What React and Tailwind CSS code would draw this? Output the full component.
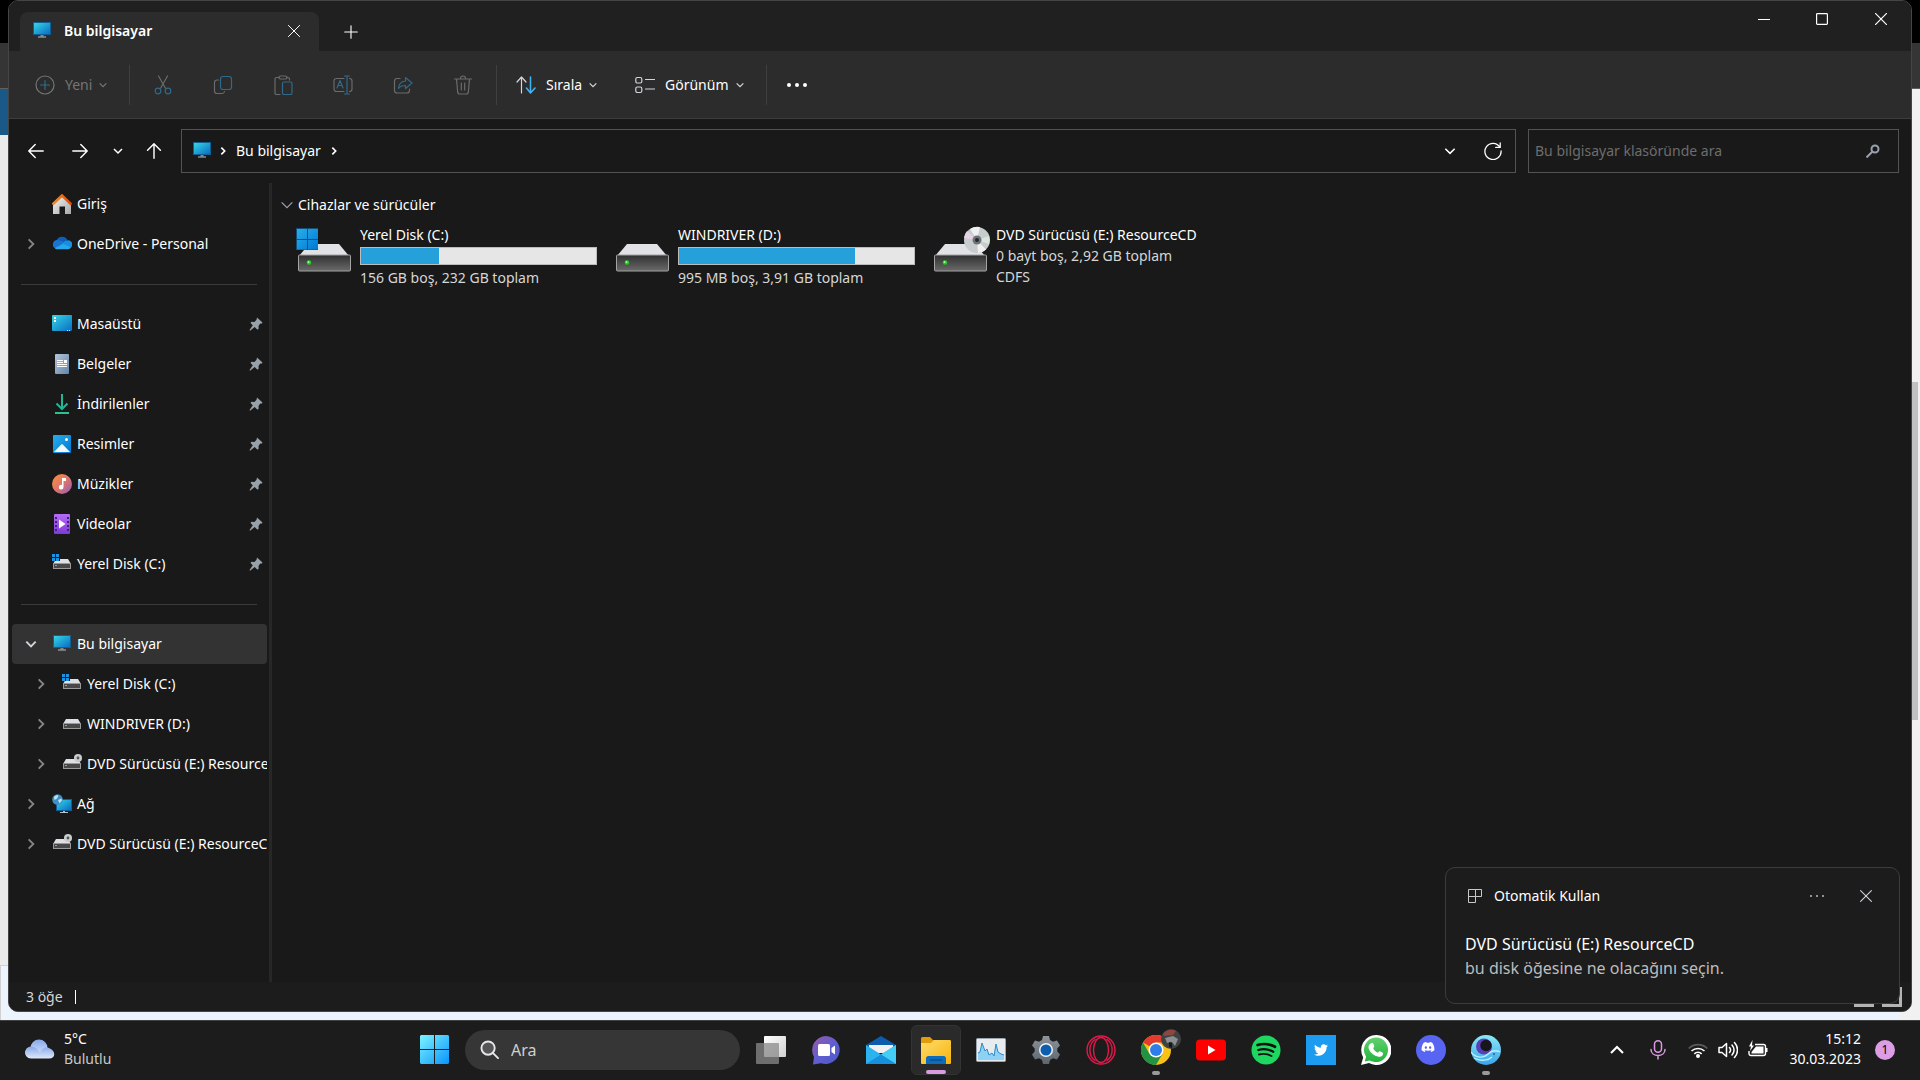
import React from 'react';
import { FaDiscord, FaTwitter } from 'react-icons/fa';

function Stroke({ children, className = 'w-5 h-5', width = 1.2 }) {
  return (
    <svg viewBox="0 0 20 20" className={className} fill="none" stroke="currentColor" strokeWidth={width} strokeLinecap="round" strokeLinejoin="round" aria-hidden="true">
      {children}
    </svg>
  );
}

function Chevron({ dir = 'down', className = 'w-3 h-3', width = 1.5 }) {
  const paths = {
    down: 'M2 4l4 4 4-4',
    up: 'M2 8l4-4 4 4',
    right: 'M4 2l4 4-4 4',
  };
  return (
    <svg viewBox="0 0 12 12" className={className} fill="none" stroke="currentColor" strokeWidth={width} aria-hidden="true">
      <path d={paths[dir]} />
    </svg>
  );
}

function Gradients() {
  return (
    <svg className="absolute w-0 h-0" aria-hidden="true">
      <defs>
        <linearGradient id="screen" x1="0" y1="0" x2="1" y2="1">
          <stop offset="0" stopColor="#35d6e6" />
          <stop offset="1" stopColor="#0a6cc4" />
        </linearGradient>
        <linearGradient id="winBlue" x1="0" y1="0" x2="1" y2="1">
          <stop offset="0" stopColor="#28aeea" />
          <stop offset="1" stopColor="#0078d4" />
        </linearGradient>
        <linearGradient id="start" gradientUnits="userSpaceOnUse" x1="0" y1="0" x2="29" y2="29">
          <stop offset="0" stopColor="#7cf3ff" />
          <stop offset="1" stopColor="#0a94fb" />
        </linearGradient>
        <linearGradient id="driveFront" x1="0" y1="0" x2="0" y2="1">
          <stop offset="0" stopColor="#303030" />
          <stop offset="1" stopColor="#6a6a6a" />
        </linearGradient>
        <linearGradient id="house" x1="0" y1="0" x2="1" y2="1">
          <stop offset="0" stopColor="#f5f5f5" />
          <stop offset="1" stopColor="#a8a8a8" />
        </linearGradient>
        <linearGradient id="roof" x1="0" y1="0" x2="1" y2="0">
          <stop offset="0" stopColor="#f5911e" />
          <stop offset="1" stopColor="#d9480f" />
        </linearGradient>
        <linearGradient id="doc" x1="0" y1="0" x2="1" y2="1">
          <stop offset="0" stopColor="#b4c6dc" />
          <stop offset="1" stopColor="#6484a8" />
        </linearGradient>
        <linearGradient id="music" x1="0" y1="0" x2="1" y2="1">
          <stop offset="0" stopColor="#fb923c" />
          <stop offset="0.5" stopColor="#e0756b" />
          <stop offset="1" stopColor="#8e5bbd" />
        </linearGradient>
        <linearGradient id="video" x1="0" y1="0" x2="0" y2="1">
          <stop offset="0" stopColor="#b56cf5" />
          <stop offset="1" stopColor="#7d3bd6" />
        </linearGradient>
        <linearGradient id="cloud" x1="0" y1="0" x2="0" y2="1">
          <stop offset="0" stopColor="#86a9ea" />
          <stop offset="1" stopColor="#dfe8fa" />
        </linearGradient>
        <linearGradient id="chat" x1="0" y1="0" x2="1" y2="1">
          <stop offset="0" stopColor="#9a58a0" />
          <stop offset="0.5" stopColor="#5f5fd0" />
          <stop offset="1" stopColor="#4c55c8" />
        </linearGradient>
        <linearGradient id="folder" x1="0" y1="0" x2="1" y2="1">
          <stop offset="0" stopColor="#ffdc6b" />
          <stop offset="1" stopColor="#f6b40c" />
        </linearGradient>
        <linearGradient id="gear" x1="0" y1="0" x2="0" y2="1">
          <stop offset="0" stopColor="#8d9399" />
          <stop offset="1" stopColor="#5c6670" />
        </linearGradient>
        <linearGradient id="ring" x1="0" y1="0" x2="0" y2="1">
          <stop offset="0" stopColor="#8be9f7" />
          <stop offset="1" stopColor="#3aa4ea" />
        </linearGradient>
        <linearGradient id="wa" x1="0" y1="0" x2="0" y2="1">
          <stop offset="0" stopColor="#5fd16d" />
          <stop offset="1" stopColor="#26b33e" />
        </linearGradient>
        <linearGradient id="task" x1="0" y1="0" x2="1" y2="1">
          <stop offset="0" stopColor="#ffffff" />
          <stop offset="1" stopColor="#d0d0d0" />
        </linearGradient>
      </defs>
    </svg>
  );
}

/* ---------- folder and device icons, 20px grid ---------- */

function MonitorIcon() {
  return (
    <svg viewBox="0 0 20 20" className="w-5 h-5 shrink-0" aria-hidden="true">
      <rect x="1" y="1" width="18" height="13" fill="#0f5f92" />
      <rect x="2" y="2" width="16" height="11" fill="url(#screen)" />
      <path d="M8.500 14h3v1.500h-3z" fill="#7d8790" />
      <path d="M6 15.500h8v1H6z" fill="#b8c0c8" />
    </svg>
  );
}

function HomeIcon() {
  return (
    <svg viewBox="0 0 20 20" className="w-5 h-5 shrink-0" aria-hidden="true">
      <path d="M1 9.500L10 2l9 7.500V20h-6v-7.500H7.500V20H1z" fill="url(#house)" />
      <path d="M.5 10.500L10 1.500l9.500 9" fill="none" stroke="url(#roof)" strokeWidth="2.600" />
    </svg>
  );
}

function OneDriveIcon() {
  return (
    <svg viewBox="0 0 20 20" className="w-5 h-5 shrink-0" aria-hidden="true">
      <path d="M4.500 6.500A6 6 0 0 1 15.500 6l-4 5z" fill="#0f5fb8" />
      <path d="M4.500 6a4.500 4.500 0 0 0-1 8.500l9-5.500C9 6.500 7 5.800 4.500 6z" fill="#1a74d2" />
      <path d="M15.300 6.500c-2.500 0-4 2-6 4.500l8 3.500a4.100 4.100 0 0 0-2-8z" fill="#1590e0" />
      <path d="M3 14l8-4.200 7.800 3.800c-.7 1.200-1.600 1.700-3.300 1.700H4.500c-.6 0-1.200-.4-1.500-1.300z" fill="#28a8ea" />
    </svg>
  );
}

function DesktopIcon() {
  return (
    <svg viewBox="0 0 20 20" className="w-5 h-5 shrink-0" aria-hidden="true">
      <rect x="0" y="1" width="20" height="16" rx="1" fill="url(#screen)" />
      <path d="M2 3h2v2H2zM2 6h2v2H2z" fill="#fff" />
      <path d="M15 16h1v1h-1zM17 16h1v1h-1z" fill="#cfe9ff" />
    </svg>
  );
}

function DocumentsIcon() {
  return (
    <svg viewBox="0 0 20 20" className="w-5 h-5 shrink-0" aria-hidden="true">
      <rect x="3" y="0" width="14" height="20" rx="1" fill="url(#doc)" />
      <path d="M5 6h6v1H5zM5 8h6v1H5zM12 6h3v3h-3zM5 10h10v1H5zM5 12h10v1H5z" fill="#fff" />
    </svg>
  );
}

function DownloadsIcon() {
  return (
    <svg viewBox="0 0 20 20" className="w-5 h-5 shrink-0" fill="none" stroke="#22b794" strokeWidth="2" aria-hidden="true">
      <path d="M10 0v15M4.500 9.500L10 15l5.500-5.500" />
      <path d="M3 19h14" stroke="#2cc28f" />
    </svg>
  );
}

function PicturesIcon() {
  return (
    <svg viewBox="0 0 20 20" className="w-5 h-5 shrink-0" aria-hidden="true">
      <rect x="1" y="1" width="18" height="18" rx="1" fill="url(#winBlue)" />
      <path d="M2 18l7-7.200c.6-.6 1.400-.6 2 0L18 18z" fill="#f2f8ff" />
      <circle cx="14.500" cy="5.500" r="1.500" fill="#fff" />
    </svg>
  );
}

function MusicIcon() {
  return (
    <svg viewBox="0 0 20 20" className="w-5 h-5 shrink-0" aria-hidden="true">
      <circle cx="10" cy="10" r="10" fill="url(#music)" />
      <path d="M10 4h4v3h-2.500v6a2.300 2.300 0 1 1-1.500-2z" fill="#fff" />
    </svg>
  );
}

function VideosIcon() {
  return (
    <svg viewBox="0 0 20 20" className="w-5 h-5 shrink-0" aria-hidden="true">
      <rect x="2" y="0" width="16" height="20" rx="1" fill="url(#video)" />
      <path d="M3 3h2v2H3zM3 7h2v2H3zM3 11h2v2H3zM3 15h2v2H3zM15 3h2v2h-2zM15 7h2v2h-2zM15 11h2v2h-2zM15 15h2v2h-2z" fill="#43207a" />
      <path d="M7 5.500l6.500 4.500L7 14.500z" fill="#fff" />
    </svg>
  );
}

function SmallDrive({ badge }) {
  return (
    <svg viewBox="0 0 20 20" className="w-5 h-5 shrink-0" aria-hidden="true">
      <path d="M4 5h12l3 5H1z" fill="#dfe0e4" />
      <rect x="1" y="9" width="18" height="6" fill="#9a9a9a" />
      <rect x="2" y="10" width="16" height="4" fill="#484848" />
      <rect x="3" y="11" width="2" height="1" fill="#3de03d" />
      {badge === 'windows' && (
        <>
          <rect x="0" y="-1" width="8" height="8" fill="#191919" />
          <path d="M0 0h3v3H0zM4 0h3v3H4zM0 4h3v3H0zM4 4h3v3H4z" fill="#1b93e0" />
        </>
      )}
      {badge === 'disc' && (
        <>
          <circle cx="16" cy="4" r="4" fill="#c8cccf" />
          <circle cx="16" cy="4" r="1.400" fill="#555" />
        </>
      )}
    </svg>
  );
}

function NetworkIcon() {
  return (
    <svg viewBox="0 0 20 20" className="w-5 h-5 shrink-0" aria-hidden="true">
      <rect x="4" y="5" width="16" height="12" fill="#0f5f92" />
      <rect x="5" y="6" width="14" height="10" fill="url(#screen)" />
      <path d="M11 17h2v1h3v1H8v-1h3z" fill="#b8c0c8" />
      <circle cx="5.500" cy="5.500" r="5.300" fill="#3f8fc4" />
      <path d="M2 3c1.500-2 3.500-2 4.500-1.500L5 4.500 2.500 6zM6 6l3.500-1.500.5 2-2.500 3z" fill="#bfe3f5" />
    </svg>
  );
}

function PinIcon() {
  return (
    <svg viewBox="0 0 14 14" className="w-3.5 h-3.5 shrink-0" aria-hidden="true">
      <path d="M8 .5l5.500 5-1 1.200-1.300-.2L9.500 9l.2 2.500-1.200 1.200-2.800-2.600L1 13.800.5 13l3.300-4.700L1.500 6l1-1.200 3 .2 2-2.300z" fill="#98a1a8" />
    </svg>
  );
}

function BigDrive({ badge }) {
  return (
    <svg viewBox="0 0 60 50" className="w-15 h-12.5 shrink-0" aria-hidden="true">
      <path d="M13 20h30l10 12H3z" fill="#e1e2e6" />
      <rect x="2.500" y="31" width="52" height="16" rx="1" fill="url(#driveFront)" stroke="#a3a3a3" />
      <circle cx="13" cy="38.500" r="2.300" fill="#1ed31e" />
      <circle cx="12.500" cy="38" r="0.900" fill="#a9ffa0" />
      {badge === 'windows' && (
        <>
          <path d="M0 4h22v22H0z" fill="#12507c" />
          <path d="M1 5h10v10H1zM12 5h10v10H12zM1 16h10v9.500H1zM12 16h10v9.500H12z" fill="url(#winBlue)" />
        </>
      )}
      {badge === 'disc' && (
        <>
          <circle cx="45" cy="16" r="13" fill="#c9cccd" />
          <path d="M45 16L38 5a13 13 0 0 1 10-2zM45 16l9 9.500a13 13 0 0 1-8 3.500z" fill="#eef1f0" />
          <path d="M45 16l12-4a13 13 0 0 1 0 8z" fill="#d8e6dc" />
          <path d="M45 16l-13-2a13 13 0 0 1 3-7z" fill="#e4d3e4" />
          <circle cx="45" cy="16" r="4.500" fill="#6d7376" />
          <circle cx="45" cy="16" r="2" fill="#23282a" />
        </>
      )}
    </svg>
  );
}

/* ---------- window chrome ---------- */

function TitleBar() {
  return (
    <div className="flex justify-between h-[50px] bg-[#202020]">
      <div className="flex items-end">
        <div className="flex items-center w-[299px] h-[39px] ml-[11px] pl-3 pr-[14px] pb-0.5 bg-[#2c2c2c] rounded-t-lg text-white" role="tab" aria-selected="true">
          <MonitorIcon />
          <span className="ml-3 flex-1 font-semibold">Bu bilgisayar</span>
          <button aria-label="Sekmeyi kapat" className="p-1">
            <Stroke className="w-3.5 h-3.5" width={1.4}><path d="M2 2l16 16M18 2L2 18" /></Stroke>
          </button>
        </div>
        <button aria-label="Yeni sekme" className="flex items-center justify-center w-10 h-[39px] ml-3 text-white">
          <Stroke className="w-3.5 h-3.5" width={1.6}><path d="M10 1v18M1 10h18" /></Stroke>
        </button>
      </div>
      <div className="flex h-9 text-white">
        <button aria-label="Simge durumuna küçült" className="flex items-center justify-center w-[58px]">
          <svg viewBox="0 0 12 12" className="w-3 h-3"><path d="M0 6h12v1H0z" fill="currentColor" /></svg>
        </button>
        <button aria-label="Ekranı kapla" className="flex items-center justify-center w-[58px]">
          <svg viewBox="0 0 12 12" className="w-3 h-3"><rect x="0.600" y="0.600" width="10.800" height="10.800" rx="0.800" fill="none" stroke="currentColor" strokeWidth="1.200" /></svg>
        </button>
        <button aria-label="Kapat" className="flex items-center justify-center w-[60px]">
          <svg viewBox="0 0 12 12" className="w-3 h-3"><path d="M0 0l12 12M12 0L0 12" stroke="currentColor" strokeWidth="1.200" /></svg>
        </button>
      </div>
    </div>
  );
}

const toolIcons = [
  {
    label: 'Kes',
    art: (
      <>
        <path d="M5.500 1l6.800 12M14.500 1L7.700 13" />
        <g stroke="#2f6a8a"><circle cx="5" cy="16" r="2.800" /><circle cx="15" cy="16" r="2.800" /></g>
      </>
    ),
  },
  {
    label: 'Kopyala',
    art: (
      <>
        <path d="M5.500 5H4a2.500 2.500 0 0 0-2.500 2.500V16A2.500 2.500 0 0 0 4 18.500h5a2.500 2.500 0 0 0 2.500-2" />
        <rect x="7.500" y="1.500" width="11" height="13" rx="2.500" stroke="#2f6a8a" />
      </>
    ),
  },
  {
    label: 'Yapıştır',
    art: (
      <>
        <path d="M6 2.500H3.500A1.500 1.500 0 0 0 2 4v14a1.500 1.500 0 0 0 1.500 1.500H7M14 2.500h1A1.500 1.500 0 0 1 16.500 4v1" />
        <rect x="6" y="1" width="8" height="3" rx="1.500" />
        <rect x="9.500" y="7" width="9.500" height="12.500" rx="1.500" stroke="#2f6a8a" />
      </>
    ),
  },
  {
    label: 'Yeniden adlandır',
    art: (
      <>
        <path d="M11 3.500H3.500A2.500 2.500 0 0 0 1 6v8a2.500 2.500 0 0 0 2.500 2.500H11M16.500 3.500A2.500 2.500 0 0 1 19 6v8a2.500 2.500 0 0 1-2.500 2.500" />
        <path d="M4 13l3-7.500L10 13M5 10.500h4M11.500 1h5M11.500 19h5M14 1v18" stroke="#2f6a8a" />
      </>
    ),
  },
  {
    label: 'Paylaş',
    art: (
      <>
        <path d="M7 3.500H4A2.500 2.500 0 0 0 1.500 6v9.500A2.500 2.500 0 0 0 4 18h10a2.500 2.500 0 0 0 2.500-2.500V14" />
        <path d="M12.500 2.500L19 8l-6.500 5.500V10.500c-3.500 0-5.500 1-7 3 .2-4 2.500-7 7-7.500z" stroke="#2f6a8a" />
      </>
    ),
  },
  {
    label: 'Sil',
    art: <path d="M1.500 4h17M3.500 4l1.200 13.500a2 2 0 0 0 2 1.500h6.600a2 2 0 0 0 2-1.500L16.500 4M7.500 3.500a2.500 2.500 0 0 1 5 0M8.300 8v7M11.700 8v7" />,
  },
];

function Toolbar() {
  return (
    <div className="flex items-center h-[68px] pl-6 bg-[#2c2c2c] border-b border-[#3d3d3d] text-white">
      <button className="flex items-center w-24 h-10 pl-0.5 text-[#757575]">
        <Stroke><circle cx="10" cy="10" r="9" /><path d="M10 5.500v9M5.500 10h9" stroke="#2f6a8a" /></Stroke>
        <span className="ml-2.5 mr-1.5">Yeni</span>
        <Chevron className="w-2.5 h-2.5" />
      </button>
      <div className="w-px h-10 bg-[#3f3f3f]" />
      <div className="flex px-[3px]">
        {toolIcons.map((tool) => (
          <button key={tool.label} aria-label={tool.label} className="flex items-center justify-center w-15 h-10 text-[#6b6b6b]">
            <Stroke>{tool.art}</Stroke>
          </button>
        ))}
      </div>
      <div className="w-px h-10 bg-[#3f3f3f]" />
      <button className="flex items-center w-[118px] h-10 pl-[19px]">
        <Stroke><path d="M5.500 18V2.500M1 7l4.500-5L10 7" stroke="#d6d6d6" /><path d="M14.500 2v15.500M10.500 13l4 5 4.500-5" stroke="#3fb2f2" strokeWidth="1.600" /></Stroke>
        <span className="ml-2.5 mr-1.5">Sırala</span>
        <Chevron className="w-2.5 h-2.5 text-gray-300" />
      </button>
      <button className="flex items-center w-[151px] h-10 pl-5">
        <Stroke className="w-5 h-5 text-gray-300"><rect x="0.800" y="2.500" width="6" height="5.500" rx="1.500" /><rect x="0.800" y="12" width="6" height="5.500" rx="1.500" /><path d="M10.500 4.500h9M10.500 14h9" /></Stroke>
        <span className="ml-2.5 mr-1.5">Görünüm</span>
        <Chevron className="w-2.5 h-2.5 text-gray-300" />
      </button>
      <div className="w-px h-10 bg-[#3f3f3f]" />
      <button aria-label="Diğer" className="flex items-center justify-center w-15 h-10">
        <svg viewBox="0 0 20 4" className="w-5 h-1" fill="currentColor"><circle cx="2" cy="2" r="2" /><circle cx="10" cy="2" r="2" /><circle cx="18" cy="2" r="2" /></svg>
      </button>
    </div>
  );
}

function AddressBar() {
  return (
    <div className="flex items-center py-2.5 pr-3 text-white">
      <div className="flex items-center w-[172px] pl-[17px]">
        <button aria-label="Geri" className="w-11 pl-0.5"><Stroke className="w-4 h-4" width={1.8}><path d="M19 10H1.500M9 2L1 10l8 8" /></Stroke></button>
        <button aria-label="İleri" className="w-10 pl-0.5"><Stroke className="w-4 h-4" width={1.8}><path d="M1 10h17.500M11 2l8 8-8 8" /></Stroke></button>
        <button aria-label="Son konumlar" className="w-9 pl-0.5"><Chevron /></button>
        <button aria-label="Yukarı" className="w-5"><Stroke className="w-4 h-4" width={1.8}><path d="M10 19V1.500M2 9l8-8 8 8" /></Stroke></button>
      </div>
      <div className="flex items-center flex-1 h-11 pl-2.5 pr-[11px] border border-[#535353]">
        <MonitorIcon />
        <Chevron dir="right" className="w-2.5 h-2.5 ml-1.5" width={2} />
        <a href="#bu-bilgisayar" className="ml-2">Bu bilgisayar</a>
        <Chevron dir="right" className="w-2.5 h-2.5 ml-2" width={2} />
        <button aria-label="Önceki konumlar" className="ml-auto p-3"><Chevron className="w-3.5 h-3.5" width={1.3} /></button>
        <button aria-label="Yenile" className="ml-[13px] p-0.5">
          <Stroke className="w-4.5 h-4.5" width={1.4}><path d="M17.500 5.500A9 9 0 1 0 19 10M18 1v5h-5" /></Stroke>
        </button>
      </div>
      <label className="flex items-center w-[371px] h-11 ml-3 pl-1.5 pr-[18px] border border-[#535353]">
        <input type="search" aria-label="Ara" placeholder="Bu bilgisayar klasöründe ara" className="flex-1 min-w-0 bg-transparent outline-none placeholder:text-[#6d6d6d]" />
        <svg viewBox="0 0 14 14" className="w-3.5 h-3.5 text-gray-400" fill="none" stroke="currentColor" strokeWidth="2"><circle cx="9" cy="5" r="3.500" /><path d="M6.500 7.500l-6 6" /></svg>
      </label>
    </div>
  );
}

/* ---------- navigation pane ---------- */

const quickAccess = [
  { label: 'Masaüstü', icon: <DesktopIcon /> },
  { label: 'Belgeler', icon: <DocumentsIcon /> },
  { label: 'İndirilenler', icon: <DownloadsIcon /> },
  { label: 'Resimler', icon: <PicturesIcon /> },
  { label: 'Müzikler', icon: <MusicIcon /> },
  { label: 'Videolar', icon: <VideosIcon /> },
  { label: 'Yerel Disk (C:)', icon: <SmallDrive badge="windows" /> },
];

function NavRow({ icon, label, expand, nested, pinned, selected }) {
  return (
    <a
      href="#klasor"
      className={`flex items-center h-10 ml-[3px] mr-0.5 overflow-hidden whitespace-nowrap ${nested ? 'pl-[22px]' : 'pl-3'} ${selected ? 'bg-[#333333] rounded-sm' : ''}`}
    >
      <span className="w-7 shrink-0 text-[#858585]">
        {expand && <Chevron dir={expand} className={expand === 'down' ? 'w-3.5 h-3.5 text-gray-300' : 'w-3.5 h-3.5'} width={1.6} />}
      </span>
      {icon}
      <span className={pinned ? 'ml-[5px] flex-1' : 'ml-[5px]'}>{label}</span>
      {pinned && <span className="mr-1"><PinIcon /></span>}
    </a>
  );
}

function Rule() {
  return (
    <div className="flex items-center h-10 px-3">
      <hr className="w-full border-[#3b3b3b]" />
    </div>
  );
}

function Sidebar() {
  return (
    <nav className="w-[263px] shrink-0 pt-px border-r-3 border-[#272727] text-white">
      <NavRow icon={<HomeIcon />} label="Giriş" />
      <NavRow icon={<OneDriveIcon />} label="OneDrive - Personal" expand="right" />
      <Rule />
      {quickAccess.map((item) => (
        <NavRow key={item.label} icon={item.icon} label={item.label} pinned />
      ))}
      <Rule />
      <NavRow icon={<MonitorIcon />} label="Bu bilgisayar" expand="down" selected />
      <NavRow icon={<SmallDrive badge="windows" />} label="Yerel Disk (C:)" expand="right" nested />
      <NavRow icon={<SmallDrive />} label="WINDRIVER (D:)" expand="right" nested />
      <NavRow icon={<SmallDrive badge="disc" />} label="DVD Sürücüsü (E:) ResourceCD" expand="right" nested />
      <NavRow icon={<NetworkIcon />} label="Ağ" expand="right" />
      <NavRow icon={<SmallDrive badge="disc" />} label="DVD Sürücüsü (E:) ResourceCD" expand="right" />
    </nav>
  );
}

/* ---------- drives ---------- */

const drives = [
  { name: 'Yerel Disk (C:)', info: '156 GB boş, 232 GB toplam', used: 33, badge: 'windows' },
  { name: 'WINDRIVER (D:)', info: '995 MB boş, 3,91 GB toplam', used: 75 },
  { name: 'DVD Sürücüsü (E:) ResourceCD', info: '0 bayt boş, 2,92 GB toplam', fs: 'CDFS', badge: 'disc' },
];

function Drive({ drive }) {
  return (
    <article className="flex w-[318px]">
      <BigDrive badge={drive.badge} />
      <div className="ml-1 w-[237px] whitespace-nowrap">
        <h3 className="leading-[21px] text-white">{drive.name}</h3>
        {drive.used !== undefined && (
          <div className="h-[18px] my-[2px] border border-[#bcbcbc] bg-[#e6e6e6]" role="meter" aria-label={drive.name} aria-valuenow={drive.used}>
            <div className="h-full bg-[#26a0da]" style={{ width: `${drive.used}%` }} />
          </div>
        )}
        <p className="leading-[21px] text-[#d6d6d6]">{drive.info}</p>
        {drive.fs && <p className="leading-[21px] text-[#d6d6d6]">{drive.fs}</p>}
      </div>
    </article>
  );
}

function StatusBar() {
  return (
    <footer className="flex items-center h-[29px] pl-[17px] pr-[9px] bg-[#1c1c1c] text-[#d6d6d6]">
      <span>3 öğe</span>
      <span className="w-px h-3.5 ml-3 bg-white" />
      <button aria-label="Ayrıntılar" className="w-5 h-5 ml-auto border-3 border-[#b4b4b4]" />
      <button aria-label="Büyük simgeler" className="w-5 h-5 ml-2 border-3 border-[#b4b4b4]" />
    </footer>
  );
}

function Explorer() {
  return (
    <section className="flex flex-col flex-1 mx-2 mb-2 bg-[#191919] border border-[#454545] rounded-[10px] overflow-hidden relative">
      <TitleBar />
      <Toolbar />
      <AddressBar />
      <div className="flex flex-1 min-h-0">
        <Sidebar />
        <main className="flex-1 pt-2.5 pl-[7px]">
          <h2 className="flex items-center h-6 text-white">
            <Chevron className="w-4 h-4 mr-[3px] text-gray-400" width={0.9} />
            Cihazlar ve sürücüler
          </h2>
          <div className="flex flex-wrap mt-[7px] pl-[17px]">
            {drives.map((drive) => <Drive key={drive.name} drive={drive} />)}
          </div>
        </main>
      </div>
      <StatusBar />
    </section>
  );
}

function Toast() {
  return (
    <aside className="absolute right-5 bottom-4 w-[455px] h-[137px] px-[19px] bg-[#1c1c1c] border border-[#3c3c3c] rounded-[10px] text-white" role="alert">
      <div className="flex items-center pt-2.5 h-[45px]">
        <svg viewBox="0 0 14 14" className="w-3.5 h-3.5 ml-[3px]" fill="none" stroke="#c8c8c8"><path d="M.5.5h13v7h-6v6h-7zM.5 7.500h7M7.500 .5v7" /></svg>
        <span className="ml-3 flex-1">Otomatik Kullan</span>
        <button aria-label="Ayarlar" className="mr-9">
          <svg viewBox="0 0 14 4" className="w-3.5 h-1" fill="#b8b8b8"><circle cx="1" cy="2" r="1" /><circle cx="7" cy="2" r="1" /><circle cx="13" cy="2" r="1" /></svg>
        </button>
        <button aria-label="Bildirimi kapat" className="mr-2"><Stroke className="w-3 h-3 text-gray-300" width={1.8}><path d="M1 1l18 18M19 1L1 19" /></Stroke></button>
      </div>
      <p className="mt-[19px] text-base leading-6">DVD Sürücüsü (E:) ResourceCD</p>
      <p className="text-base leading-6 text-[#bdbdbd]">bu disk öğesine ne olacağını seçin.</p>
    </aside>
  );
}

/* ---------- taskbar ---------- */

const apps = [
  {
    label: 'Görev görünümü',
    art: (
      <>
        <rect x="8" y="1" width="22" height="21" rx="1" fill="url(#task)" />
        <rect x="0" y="8" width="23" height="21" rx="1" fill="#8a8a8a" opacity="0.750" />
      </>
    ),
  },
  {
    label: 'Sohbet',
    art: (
      <>
        <path d="M15 1a14 14 0 1 1-5 27.200L2 29.500l1-7.500A14 14 0 0 1 15 1z" fill="url(#chat)" />
        <rect x="7" y="9" width="12" height="12" rx="1.500" fill="#fff" />
        <path d="M20.500 13l3.500-2.500v9L20.500 17z" fill="#fff" />
      </>
    ),
  },
  {
    label: 'Posta',
    art: (
      <>
        <path d="M0 10L15 1l15 9v4H0z" fill="#0b5cad" />
        <path d="M3 10h24v8H3z" fill="#f0f0f0" />
        <path d="M0 10l15 9.500L30 10v19H0z" fill="#2bb3f0" />
        <path d="M15 19.500L30 10v19z" fill="#43cdf5" />
        <path d="M0 29h30L15 19.500z" fill="#168fdc" />
      </>
    ),
  },
  {
    label: 'Dosya Gezgini',
    active: true,
    art: (
      <>
        <path d="M0 3.500A1.500 1.500 0 0 1 1.500 2H9l3 3h16.500A1.500 1.500 0 0 1 30 6.500V12H0z" fill="#e09c0b" />
        <path d="M0 8h10l3-3h15.500A1.500 1.500 0 0 1 30 6.500V28a1 1 0 0 1-1 1H1a1 1 0 0 1-1-1z" fill="url(#folder)" />
        <path d="M5 29v-5.500A2.500 2.500 0 0 1 7.500 21h15a2.500 2.500 0 0 1 2.500 2.500V29z" fill="#0c6cbd" />
        <path d="M9 25h12" stroke="#0a3d75" />
      </>
    ),
  },
  {
    label: 'Görev Yöneticisi',
    art: (
      <>
        <rect x="0.500" y="3.500" width="29" height="23" rx="1" fill="#e8ecef" stroke="#9aa5ad" />
        <path d="M2 18l2-1 2-9 3 8 2-2 2 6 3-2 2 3 2-12 2 8 3 2 3 1v5H2z" fill="#8fd0f5" />
        <path d="M2 18l2-1 2-9 3 8 2-2 2 6 3-2 2 3 2-12 2 8 3 2 3 1" fill="none" stroke="#2c8bc8" />
      </>
    ),
  },
  {
    label: 'Ayarlar',
    art: (
      <>
        <path d="M12 1h6l1 4 3 1.700L26 5.500l3 5-2.700 3v3l2.700 3-3 5-4-1.200L19 25l-1 4h-6l-1-4-3-1.700-4 1.200-3-5 2.700-3v-3L1 10.500l3-5 4 1.200L11 5z" fill="url(#gear)" />
        <circle cx="15" cy="15" r="7" fill="#f0f3f5" />
        <circle cx="15" cy="15" r="5.500" fill="#0d5eae" />
      </>
    ),
  },
  {
    label: 'Opera GX',
    art: (
      <g fill="none" stroke="#e0194a" strokeWidth="1.400">
        <circle cx="15" cy="15" r="14" />
        <ellipse cx="15" cy="15" rx="7.500" ry="12.500" />
        <path d="M9.500 4C2 9 2 21 9.500 26M20.500 4c7.500 5 7.500 17 0 22" />
      </g>
    ),
  },
  {
    label: 'Google Chrome',
    running: true,
    avatar: true,
    art: (
      <>
        <circle cx="15" cy="15" r="15" fill="#fbc116" />
        <path d="M15 15L2 7.500A15 15 0 0 1 28 7.500H15z" fill="#e33b2e" />
        <path d="M15 15L8.500 18.800 2 7.500A15 15 0 0 0 15 30l6.500-11.200z" fill="#229342" />
        <circle cx="15" cy="15" r="7.500" fill="#fff" />
        <circle cx="15" cy="15" r="6" fill="#2f7de9" />
      </>
    ),
  },
  {
    label: 'YouTube',
    art: (
      <>
        <rect x="0" y="4.500" width="30" height="21" rx="4" fill="#ff0000" />
        <path d="M12 10.500l7.500 4.500-7.500 4.500z" fill="#fff" />
      </>
    ),
  },
  {
    label: 'Spotify',
    art: (
      <>
        <circle cx="15" cy="15" r="14.500" fill="#1ed760" />
        <g fill="none" stroke="#111" strokeLinecap="round">
          <path d="M6.500 10c6-1.700 12-1.200 17.500 1.800" strokeWidth="2.700" />
          <path d="M7.300 15c5-1.500 10-1 15 1.700" strokeWidth="2.300" />
          <path d="M8 19.500c4.300-1.200 8.500-.8 12.500 1.500" strokeWidth="1.900" />
        </g>
      </>
    ),
  },
  {
    label: 'Twitter',
    art: (
      <>
        <rect width="30" height="30" fill="#1d9bf0" />
        <FaTwitter x="8" y="8" width="14" height="14" color="#fff" />
      </>
    ),
  },
  {
    label: 'WhatsApp',
    art: (
      <>
        <path d="M15 0a15 15 0 1 1-7 28L0 30l2.200-7.500A15 15 0 0 1 15 0z" fill="#fff" />
        <path d="M15 2.500a12.300 12.300 0 1 1-6.300 23L3.700 26.500l1.400-4.800A12.300 12.300 0 0 1 15 2.500z" fill="url(#wa)" />
        <path d="M10.500 8c1.200-.5 1.800 0 2.700 3 .2.700-.2 1.300-1 2.200 1 2 2.500 3.500 4.800 4.500.9-1.100 1.400-1.700 2-1.400l2.800 1.400c.7.500.1 2.700-1.300 3.500-2 1-4 .5-7-1-3.500-2-6-5.500-6-8 0-1.800 1.200-3.500 3-4.200z" fill="#fff" />
      </>
    ),
  },
  {
    label: 'Discord',
    art: (
      <>
        <circle cx="15" cy="15" r="15" fill="#5865f2" />
        <FaDiscord x="5" y="5" width="20" height="20" color="#fff" />
      </>
    ),
  },
  {
    label: 'GameLoop',
    running: true,
    art: (
      <>
        <circle cx="15" cy="15" r="15" fill="url(#ring)" />
        <circle cx="13" cy="11.500" r="8" fill="#5b3fb5" />
        <circle cx="15" cy="10.500" r="5.700" fill="#16161c" />
        <path d="M0 17c5 7 13 6 17 2s8-4 12-2M3 23c7 4 15 2 18-1" fill="none" stroke="#b5f2fb" strokeWidth="1.300" />
        <circle cx="23" cy="19" r="1" fill="#14659c" />
      </>
    ),
  },
];

function TaskButton({ app }) {
  return (
    <button
      aria-label={app.label}
      className={`relative flex items-center justify-center w-[50px] h-[50px] rounded-md ${app.active ? 'bg-[#2a2a2a] border border-[#333333]' : ''}`}
    >
      <svg viewBox="0 0 30 30" className="w-[30px] h-[30px]" aria-hidden="true">{app.art}</svg>
      {app.avatar && (
        <svg viewBox="0 0 20 20" className="absolute right-0 top-1 w-5 h-5" aria-hidden="true">
          <circle cx="10" cy="10" r="10" fill="#3f4244" />
          <path d="M2 5a10 10 0 0 1 13-3L12 6 3 7z" fill="#8d4640" />
          <path d="M4 9l8-2 5 3-3 7-3-4-5 1z" fill="#8b8f90" />
          <path d="M8 13l3 1v5l-3-1z" fill="#151718" />
        </svg>
      )}
      {app.active && <span className="absolute bottom-0 w-5 h-1 rounded-full bg-[#d99be0]" />}
      {app.running && <span className="absolute bottom-0 w-2 h-1 rounded-full bg-[#9a9a9a]" />}
    </button>
  );
}

function Taskbar() {
  return (
    <footer className="grid grid-cols-[1fr_auto_1fr] items-center h-15 pb-0.5 bg-[#1c1c1c] border-t border-[#414141] text-white">
      <button className="flex items-center pl-[25px] pb-0.5 text-left">
        <svg viewBox="0 0 30 20" className="w-[30px] h-5" aria-hidden="true">
          <circle cx="14" cy="9" r="8.500" fill="url(#cloud)" />
          <path d="M6 19.500a6 6 0 1 1 3-11.200C13 10 14 12 15 14c1-4 5-6.500 9-5 7 2.500 7 10.500 0 10.500z" fill="url(#cloud)" />
        </svg>
        <span className="ml-[9px]">
          <span className="block leading-5">5°C</span>
          <span className="block leading-5 text-[#c8c8c8]">Bulutlu</span>
        </span>
      </button>
      <div className="flex items-center gap-[5px]">
        <button aria-label="Başlat" className="flex items-center justify-center w-[50px] h-[50px]">
          <svg viewBox="0 0 29 29" className="w-[29px] h-[29px]" aria-hidden="true">
            <path d="M1 0h13v14H0V1zM15 0h13l1 1v13H15zM0 15h14v14H1l-1-1zM15 15h14v13l-1 1H15z" fill="url(#start)" />
          </svg>
        </button>
        <label className="flex items-center w-[275px] h-10 mx-px pl-[15px] rounded-full bg-[#363636]">
          <Stroke className="w-[19px] h-[19px] text-gray-200" width={2}><circle cx="8.500" cy="8.500" r="7" fill="#555" /><path d="M14 14l5 5" /></Stroke>
          <input type="search" aria-label="Ara" placeholder="Ara" className="ml-3 w-40 bg-transparent outline-none text-base placeholder:text-[#cfcfcf]" />
        </label>
        {apps.map((app) => <TaskButton key={app.label} app={app} />)}
      </div>
      <div className="flex items-center justify-end pr-[25px]">
        <button aria-label="Gizli simgeleri göster" className="mr-[22px]"><Chevron dir="up" className="w-4.5 h-4.5" width={1.4} /></button>
        <button aria-label="Mikrofon" className="mr-5 text-[#d99be0]">
          <Stroke width={1.5}><rect x="6.500" y="0.800" width="7" height="11.500" rx="3.500" /><path d="M3 9.500c0 8 14 8 14 0M10 15.500V19" /></Stroke>
        </button>
        <button aria-label="Ağ, ses ve pil" className="flex items-center gap-2.5">
          <svg viewBox="0 0 20 20" className="w-5 h-5" fill="none" stroke="currentColor" strokeWidth="1.600">
            <path d="M.7 8.500a13 13 0 0 1 18.600 0" stroke="#5a5a5a" />
            <path d="M3.500 11a9.500 9.500 0 0 1 13 0M6.300 13.800a5.500 5.500 0 0 1 7.400 0" />
            <circle cx="10" cy="16" r="1.200" fill="currentColor" />
          </svg>
          <Stroke width={1.5}><path d="M1 7.500h3l4.500-4v13l-4.500-4H1zM11.500 7.500c1.300 1.500 1.300 3.500 0 5M14 5c2.500 3 2.500 7 0 10M16.500 2.500c4 4.500 4 10.500 0 15" /></Stroke>
          <svg viewBox="0 0 20 20" className="w-5 h-5" fill="none" stroke="currentColor" strokeWidth="1.400">
            <path d="M7 4.500h8.500a2 2 0 0 1 2 2v7a2 2 0 0 1-2 2H3a2 2 0 0 1-2-2V11" />
            <path d="M8 6.500h7.500v7H3.500V12z" fill="currentColor" stroke="none" />
            <path d="M18 8h1.500v4H18z" fill="currentColor" stroke="none" />
            <path d="M4.500 0L1 6.500h2L2 11l4-5.500H4z" fill="currentColor" stroke="none" />
          </svg>
        </button>
        <button className="ml-5 w-[73px] pb-0.5 text-right whitespace-nowrap">
          <span className="block leading-5">15:12</span>
          <span className="block leading-5">30.03.2023</span>
        </button>
        <span className="flex items-center justify-center w-5 h-5 ml-3.5 rounded-full bg-[#dc9de4] text-xs text-black">1</span>
      </div>
    </footer>
  );
}

export default function App() {
  return (
    <div className="flex flex-col h-screen overflow-hidden font-['Noto_Sans',sans-serif] text-sm leading-5">
      <Gradients />
      <div className="relative flex flex-col flex-1 min-h-0">
        {/* browser window behind the explorer */}
        <div className="absolute inset-0 flex flex-col" aria-hidden="true">
          <div className="h-[43px] bg-black" />
          <div className="h-[46px] bg-[#353535] border-b border-[#606060]" />
          <div className="flex flex-1">
            <div className="flex flex-col w-10">
              <div className="h-[46px] bg-[#1a5888]" />
              <div className="flex-1 bg-[#ebebeb]" />
              <div className="h-[55px] bg-[#ecf4fd] border-l border-t border-[#d0d0d0]" />
            </div>
            <div className="flex-1 bg-[#ecf4fd]" />
            <div className="w-[21px] pt-[293px] pr-0.5 bg-[#f1f1f1]">
              <div className="h-[338px] bg-[#c1c1c1]" />
            </div>
          </div>
        </div>
        <Explorer />
        <Toast />
      </div>
      <Taskbar />
    </div>
  );
}
